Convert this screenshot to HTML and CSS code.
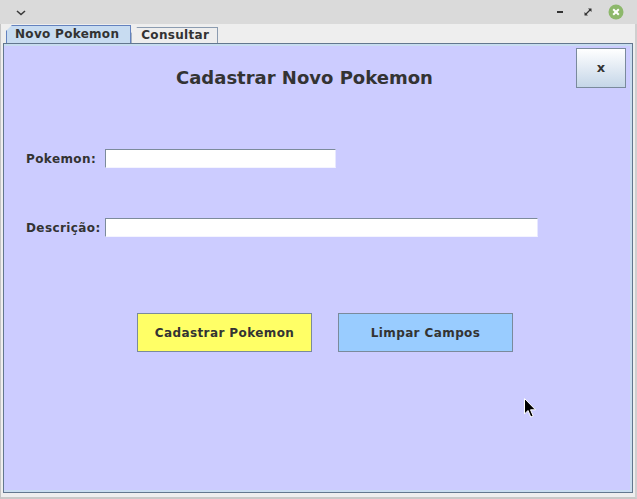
FILE: index.html
```html
<!DOCTYPE html>
<html>
<head>
<meta charset="utf-8">
<link rel="stylesheet" href="styles.css">
</head>
<body>
<div class="window">
  <div class="titlebar">
    <svg class="menu-icon" width="10" height="6" viewBox="0 0 10 6"><path d="M1 1 L5 4.5 L9 1" fill="none" stroke="#3a3a3a" stroke-width="1.6"/></svg>
    <div class="controls">
      <svg class="ctl-min" width="10" height="10" viewBox="0 0 10 10"><rect x="2" y="4" width="6" height="2" fill="#333"/></svg>
      <svg class="ctl-max" width="10" height="10" viewBox="0 0 10 10"><path d="M5 1.5 H8.5 V5 Z M1.5 5 V8.5 H5 Z" fill="#333"/><path d="M7.5 2.5 L2.5 7.5" stroke="#333" stroke-width="1.2"/></svg>
      <svg class="ctl-close" width="16" height="16" viewBox="0 0 16 16"><circle cx="8" cy="8" r="7.5" fill="#8db86b"/><path d="M5.2 5.2 L10.8 10.8 M10.8 5.2 L5.2 10.8" stroke="#fff" stroke-width="2"/></svg>
    </div>
  </div>
  <div class="frame">
    <div class="tabs">
      <div class="tab selected">Novo Pokemon</div>
      <div class="tab">Consultar</div>
    </div>
    <div class="content">
      <div class="panel">
        <div class="header">
          <h1 class="title">Cadastrar Novo Pokemon</h1>
          <button class="close-btn">x</button>
        </div>
        <div class="row row-first">
          <label class="label">Pokemon:</label>
          <div class="field field-short"></div>
        </div>
        <div class="row row-second">
          <label class="label">Descrição:</label>
          <div class="field field-long"></div>
        </div>
        <div class="actions">
          <button class="btn btn-yellow">Cadastrar Pokemon</button>
          <button class="btn btn-blue">Limpar Campos</button>
        </div>
        <svg class="cursor" width="14" height="21" viewBox="0 0 14 21"><path d="M0.5 0.5 V16 L4 12.5 L6.8 19 L9.2 18 L6.5 11.8 H11.5 Z" fill="#000" stroke="#fff" stroke-width="1"/></svg>
      </div>
    </div>
  </div>
</div>
</body>
</html>
```
FILE: styles.css
```css
* { box-sizing: border-box; }
html, body { margin: 0; padding: 0; }
body { width: 637px; height: 499px; overflow: hidden; background: #eeeeee; font-family: "DejaVu Sans", sans-serif; }
.window { width: 637px; height: 499px; display: flex; flex-direction: column; }
.titlebar { height: 24px; background: #dadada; display: flex; align-items: center; padding: 0 13px 0 16px; }
.menu-icon { margin-top: 1px; }
.controls { margin-left: auto; display: flex; align-items: center; }
.ctl-max { margin-left: 18px; }
.ctl-close { margin-left: 15px; }
.frame { flex: 1; background: #eeeeee; border-left: 1px solid #c4c4c4; border-right: 2px solid #cfcfcf; border-bottom: 2px solid #c8c8c8; padding: 2px 2px 4px 2px; display: flex; flex-direction: column; }
.tabs { display: flex; padding-left: 3px; height: 17px; align-items: flex-end; position: relative; z-index: 1; }
.tab { font-weight: bold; font-size: 12px; letter-spacing: 0.3px; color: #333; height: 16px; line-height: 15px; padding: 0 8px 0 9px; border: 1px solid #8c9cb0; border-bottom: none; background: #eeeeee; clip-path: polygon(6px 0, 100% 0, 100% 100%, 0 100%, 0 6px); position: relative; }
.tab.selected { height: 18px; line-height: 17px; background: #c8dcf1; border-color: #6382bf; padding: 0 11px 0 8px; }
.content { flex: 1; border: 1px solid #62778e; padding: 2px 2px 2px 0; background: #c8dcf0; display: flex; }
.panel { flex: 1; background: #ccccff; position: relative; }
.header { display: flex; align-items: flex-start; padding-left: 172px; padding-right: 4px; }
.title { margin: 21px 0 0 0; font-size: 18px; line-height: 22px; font-weight: bold; color: #333; }
.close-btn { margin: 2px 0 0 auto; width: 50px; height: 40px; border: 1px solid #7a8a9c; background: linear-gradient(#ffffff, #c5d6e8); font-family: "DejaVu Sans", sans-serif; font-weight: bold; font-size: 13px; color: #333; padding: 0 0 2px 0; }
.row { display: flex; align-items: center; padding-left: 22px; }
.row-first { margin-top: 60px; }
.row-second { margin-top: 50px; }
.label { width: 79px; font-size: 12px; font-weight: bold; letter-spacing: 0.4px; color: #333; }
.field { height: 19px; background: #fff; border: 1px solid #7c8b9b; border-right-color: #e8e8ff; border-bottom-color: #f4f4ff; box-shadow: inset 1px 1px 0 #fff; }
.field-short { width: 231px; }
.field-long { width: 433px; }
.actions { display: flex; gap: 26px; padding-left: 133px; margin-top: 76px; }
.btn { width: 175px; height: 39px; border: 1px solid #7a8a9c; font-family: "DejaVu Sans", sans-serif; font-weight: bold; font-size: 12px; letter-spacing: 0.4px; color: #333; padding: 0; }
.btn-yellow { background: #ffff66; }
.btn-blue { background: #99ccff; }
.cursor { position: absolute; left: 520px; top: 352px; }
```
